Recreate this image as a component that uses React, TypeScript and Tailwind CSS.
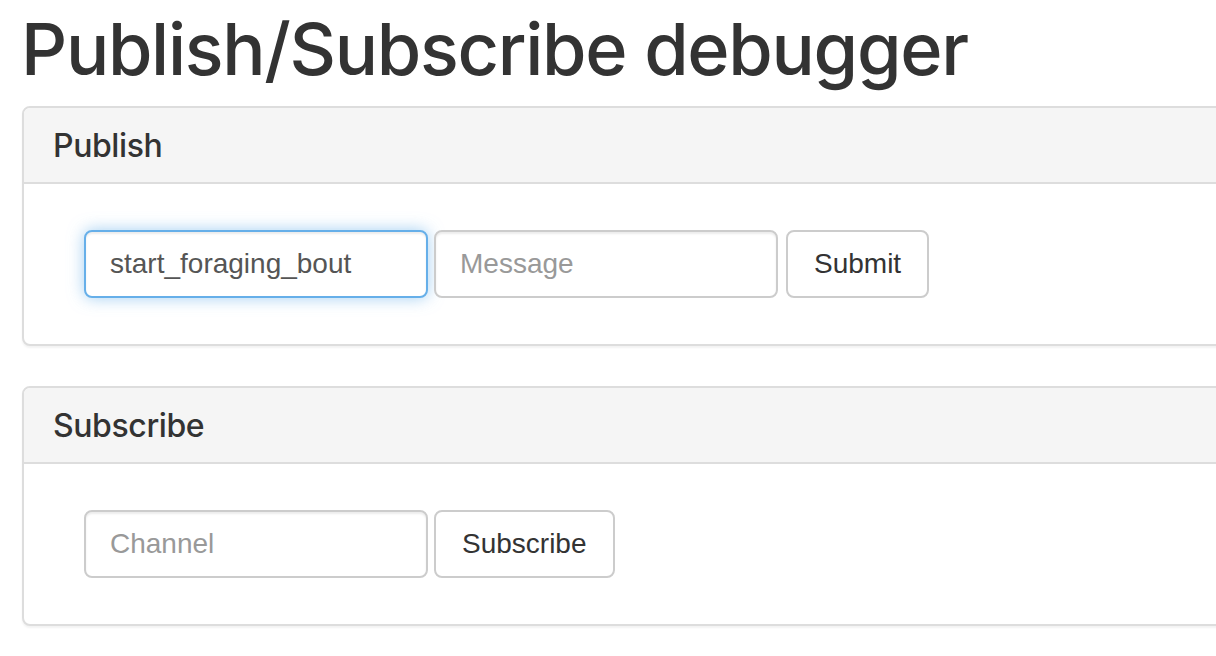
import React from "react";

function Panel({ title, children }: { title: string; children: React.ReactNode }) {
  return (
    <div className="w-[1240px] rounded-[8px] border-2 border-[#dddddd] bg-white mb-[40px] shadow-[0_2px_2px_rgba(0,0,0,0.05)]">
      <div className="bg-[#f5f5f5] border-b-2 border-[#dddddd] rounded-t-[6px] px-[30px] pt-[20px] pb-[18px]">
        <h3
          className="text-[32px] leading-[36px] font-medium tracking-[-0.4px] text-[#333333] m-0 ml-[-1px]"
          style={{ fontFamily: 'Inter, "Liberation Sans", sans-serif' }}
        >
          {title}
        </h3>
      </div>
      <div className="pl-[60px] pt-[46px] pb-[46px] flex items-center gap-[6px]">{children}</div>
    </div>
  );
}

export default function App() {
  const inputBase =
    "h-[68px] w-[344px] rounded-[8px] border-2 px-[24px] text-[28px] text-[#555555] bg-white outline-none placeholder:text-[#999999]";
  const btn =
    "h-[68px] rounded-[8px] border-2 border-[#cccccc] bg-white px-[26px] text-[28px] text-[#333333]";
  return (
    <div
      className="w-screen h-screen overflow-hidden bg-white text-[#333333]"
      style={{ fontFamily: '"Liberation Sans", Arial, sans-serif' }}
    >
      <div className="pl-[22px]">
        <h1
          className="text-[72px] leading-[1.1] font-medium tracking-[-1.3px] mt-[9px] mb-[18px] ml-[-1px] text-[#333333]"
          style={{ fontFamily: 'Inter, "Liberation Sans", sans-serif' }}
        >
          Publish/Subscribe debugger
        </h1>
        <Panel title="Publish">
          <input
            className={`${inputBase} border-[#66afe9] shadow-[inset_0_2px_2px_rgba(0,0,0,0.075),0_0_16px_rgba(102,175,233,0.6)]`}
            defaultValue="start_foraging_bout"
          />
          <input
            className={`${inputBase} border-[#cccccc] shadow-[inset_0_2px_2px_rgba(0,0,0,0.075)]`}
            placeholder="Message"
          />
          <button className={`${btn} ml-[2px]`}>Submit</button>
        </Panel>
        <Panel title="Subscribe">
          <input
            className={`${inputBase} border-[#cccccc] shadow-[inset_0_2px_2px_rgba(0,0,0,0.075)]`}
            placeholder="Channel"
          />
          <button className={btn}>Subscribe</button>
        </Panel>
      </div>
    </div>
  );
}
